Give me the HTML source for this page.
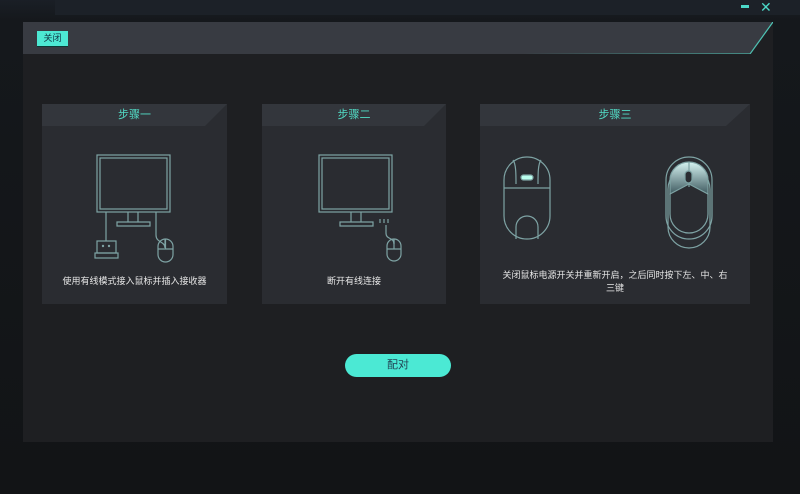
<!DOCTYPE html>
<html><head><meta charset="utf-8"><style>
*{margin:0;padding:0;box-sizing:border-box}
body{width:800px;height:494px;overflow:hidden;background:linear-gradient(180deg,#1a1f26 0,#15181c 20px,#121416 100%);font-family:"Liberation Sans","Noto Sans CJK SC",sans-serif;position:relative}
.topbar{position:absolute;left:55px;top:0;width:745px;height:15px;background:#1c2128}
.win{position:absolute;left:23px;top:22px;width:750px;height:420px;background:#1e1f22}
.hdr{position:absolute;left:0;top:0;width:750px;height:32px}
.close{position:absolute;left:14px;top:9px;width:31px;height:15px;background:#4de8d3;color:#134;font-size:9px;line-height:15px;text-align:center;box-shadow:0 1px 0 #0a3a35}
.card{position:absolute;top:82px;height:200px;background:#2a2c31}
.card .h{height:22px;color:#52dcc6;font-size:11px;text-align:center;line-height:22px}
.card .t{position:absolute;left:0;right:0;color:#e6e6e6;font-size:9px;text-align:center;line-height:13px}
.btn{position:absolute;left:322px;top:332px;width:106px;height:23px;border-radius:12px;background:#4be9d4;color:#245;font-size:11px;text-align:center;line-height:23px}
</style></head><body>
<div class="topbar"></div>
<div style="position:absolute;left:741px;top:5px;width:8px;height:3px;background:#4cd8c8"></div>
<div style="position:absolute;left:760px;top:-1px;color:#4cd8c8;font-size:14px">✕</div>
<div class="win">
<svg class="hdr" width="750" height="33"><polygon points="0,0 750,0 727,32 0,32" fill="#383b42"/><defs><linearGradient id="g" x1="0" x2="1"><stop offset="0" stop-color="#383b42"/><stop offset="1" stop-color="#4fc8b8"/></linearGradient></defs><polyline points="500,32 727,32 750,0" fill="none" stroke="url(#g)" stroke-width="1.2"/></svg>
<div class="close">关闭</div>

<div class="card" style="left:19px;width:185px">
<svg style="position:absolute;left:0;top:0" width="185" height="22"><polygon points="0,0 185,0 163,22 0,22" fill="#33363c"/></svg>
<div class="h" style="position:relative">步骤一</div>
<svg style="position:absolute;left:0;top:0" width="185" height="200" fill="none" stroke="#7ea3a4" stroke-width="1.2">
<rect x="55" y="51" width="73" height="57"/><rect x="58" y="54" width="67" height="51"/>
<path d="M86 108v10M96 108v10M75 118h33v4h-33z"/>
<path d="M64 108v29M114 108v23c0 8 9 6 9 13v-9"/>
<rect x="55" y="137" width="19" height="12"/><rect x="53" y="149" width="23" height="5"/>
<rect x="116" y="135" width="15" height="23" rx="7.5"/><path d="M116 145h15M123.5 135v10"/>
<circle cx="61" cy="142" r=".6" fill="#7ea3a4"/><circle cx="67" cy="142" r=".6" fill="#7ea3a4"/>
</svg>
<div class="t" style="top:171px">使用有线模式接入鼠标并插入接收器</div>
</div>

<div class="card" style="left:239px;width:184px">
<svg style="position:absolute;left:0;top:0" width="184" height="22"><polygon points="0,0 184,0 162,22 0,22" fill="#33363c"/></svg>
<div class="h" style="position:relative">步骤二</div>
<svg style="position:absolute;left:0;top:0" width="184" height="200" fill="none" stroke="#7ea3a4" stroke-width="1.2">
<rect x="57" y="51" width="73" height="57"/><rect x="60" y="54" width="67" height="51"/>
<path d="M89 108v10M99 108v10M78 118h33v4h-33z"/>
<path d="M118 115v4M122 115v4M126 115v4M124 121v8c0 7 8 4 8 11v-5"/>
<rect x="125" y="135" width="14" height="22" rx="7"/><path d="M125 145h14M132 135v10"/>
</svg>
<div class="t" style="top:171px">断开有线连接</div>
</div>

<div class="card" style="left:457px;width:270px">
<svg style="position:absolute;left:0;top:0" width="270" height="22"><polygon points="0,0 270,0 246,22 0,22" fill="#33363c"/></svg>
<div class="h" style="position:relative">步骤三</div>
<svg style="position:absolute;left:0;top:0" width="270" height="200" fill="none" stroke="#7ea3a4" stroke-width="1.2">
<rect x="24" y="53" width="46" height="82" rx="23"/>
<path d="M24 84h46M33 56c3 4 3 14 3 24M61 56c-3 4-3 14-3 24M36 135v-12a11 11 0 0 1 22 0v12"/>
<rect x="41" y="71" width="12" height="5" rx="2.5" fill="#bfe"/>
<defs><linearGradient id="m" x1="0" y1="0" x2="0" y2="1"><stop offset="0" stop-color="#d6f4f2"/><stop offset="1" stop-color="#3f5a60"/></linearGradient></defs>
<rect x="186" y="53" width="46" height="82" rx="23"/>
<path d="M188 85a21 21 0 0 1 42 0v38a21 21 0 0 1-42 0z"/>
<path d="M190 90a19 19 0 0 1 38 0v20a19 19 0 0 1-38 0z"/>
<path d="M190 90v-14a19 18 0 0 1 38 0v14l-19-10z" fill="url(#m)"/>
<rect x="205" y="67" width="7" height="12" rx="3.5" fill="#2a2c31"/><path d="M209 58v9M209 79v4"/>
</svg>
<div class="t" style="top:165px;padding:0 20px">关闭鼠标电源开关并重新开启，之后同时按下左、中、右三键</div>
</div>

<div class="btn">配对</div>
</div>
</body></html>
